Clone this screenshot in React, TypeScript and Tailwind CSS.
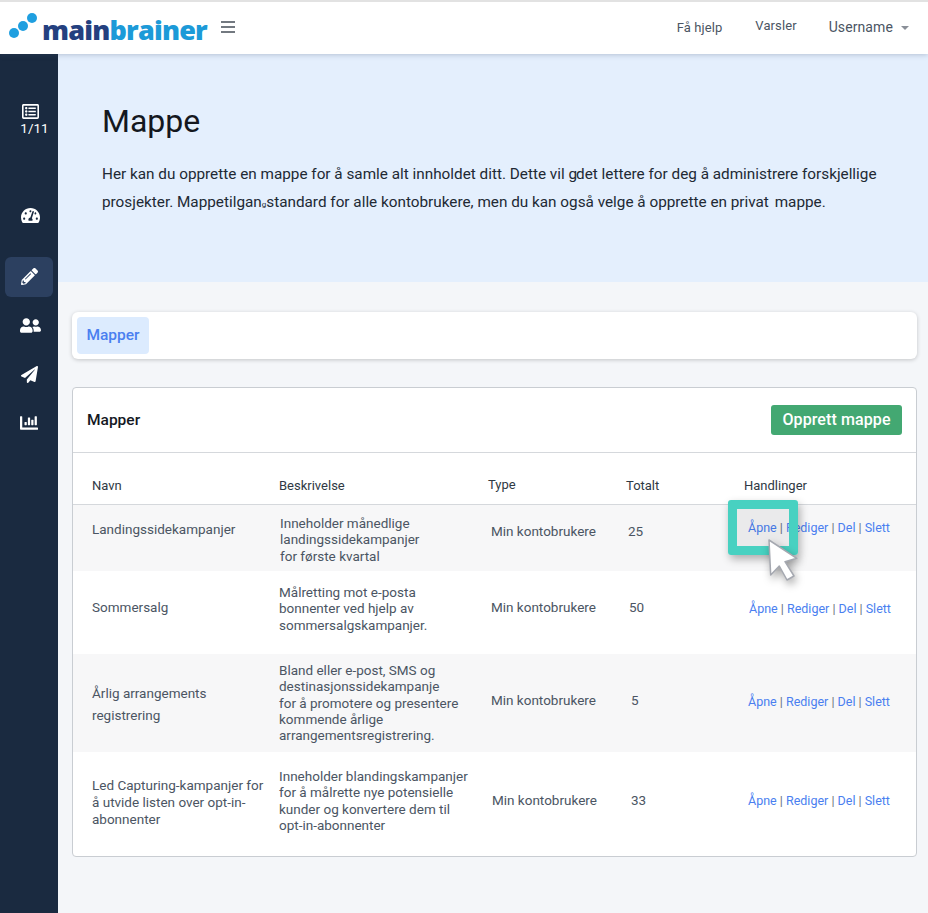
import React from 'react';
import { FaRegListAlt, FaTachometerAlt, FaPencilAlt, FaUserFriends, FaPaperPlane, FaChartBar } from 'react-icons/fa';

// the cell paddings differ per row because the picture's rows are not evenly aligned
const rows = [
  {
    name: ['Landingssidekampanjer'],
    desc: ['Inneholder månedlige', 'landingssidekampanjer', 'for første kvartal'],
    total: '25',
    rowClass: 'h-[66px] bg-[#f7f7f8]',
    nameClass: 'pt-[16px] leading-[17px]',
    descClass: 'pt-[10px] pl-px',
    typeClass: 'pt-[18px]',
    totalClass: 'pt-[18px]',
    actionClass: 'pt-[14px]',
  },
  {
    name: ['Sommersalg'],
    desc: ['Målretting mot e-posta', 'bonnenter ved hjelp av', 'sommersalgskampanjer.'],
    total: '50',
    rowClass: 'h-[83px] bg-white',
    nameClass: 'pt-[28px] leading-[17px]',
    descClass: 'pt-[13px]',
    typeClass: 'pt-[28px]',
    totalClass: 'pt-[28px] pl-px',
    actionClass: 'pt-[29px] pl-px',
  },
  {
    name: ['Årlig arrangements', 'registrering'],
    desc: ['Bland eller e-post, SMS og', 'destinasjonssidekampanje', 'for å promotere og presentere', 'kommende årlige', 'arrangementsregistrering.'],
    total: '5',
    rowClass: 'h-[98px] bg-[#f7f7f8]',
    nameClass: 'pt-[28px] leading-[22px]',
    descClass: 'pt-[8px]',
    typeClass: 'pt-[38px]',
    totalClass: 'pt-[38px] pl-[3px]',
    actionClass: 'pt-[39px]',
  },
  {
    name: ['Led Capturing-kampanjer for', 'å utvide listen over opt-in-', 'abonnenter'],
    desc: ['Inneholder blandingskampanjer', 'for å målrette nye potensielle', 'kunder og konvertere dem til', 'opt-in-abonnenter'],
    total: '33',
    rowClass: 'h-[83px] bg-white',
    nameClass: 'pt-[25px] leading-[17px]',
    descClass: 'pt-[16px]',
    typeClass: 'pt-[40px] pl-px',
    totalClass: 'pt-[40px] pl-[3px]',
    actionClass: 'pt-[40px]',
  },
];

const Actions: React.FC = () => (
  <span className="text-[12.5px] text-[#4a7ff0]">
    Åpne <span className="text-[#6b7280]">|</span> Rediger <span className="text-[#6b7280]">|</span> Del <span className="text-[#6b7280]">|</span> Slett
  </span>
);

export default function App() {
  return (
    <div className="relative w-[928px] h-[913px] overflow-hidden bg-[#f4f6f9] font-['Roboto',sans-serif] text-[#2b3440]">
      {/* top bar */}
      <header className="relative z-10 h-[54px] bg-white border-t-2 border-[#e2e2e2] shadow-[0_1px_5px_rgba(60,80,110,0.28)] flex items-center">
        <svg width="34" height="32" viewBox="0 0 34 32" className="ml-[8px] -mt-[1px] shrink-0">
          <circle cx="6" cy="21" r="5" fill="#1f9fe0" />
          <circle cx="15" cy="14" r="5" fill="#1f9fe0" />
          <circle cx="24" cy="6" r="5" fill="#1f9fe0" />
        </svg>
        <span className="mt-[3px] font-['Open_Sans',sans-serif] text-[27px] font-extrabold tracking-[-0.8px] leading-none text-[#24407f]">
          main<span className="text-[#1c9ad8]">brainer</span>
        </span>
        <svg width="14" height="12" viewBox="0 0 14 12" className="ml-[14px] -mt-[3px] shrink-0">
          <path d="M0 1h14M0 6h14M0 11h14" stroke="#454d57" strokeWidth="1.4" />
        </svg>
        <nav className="ml-auto flex items-center text-[#4b5563] -mt-[1px] tracking-[0.1px]">
          <span className="text-[13px]">Få hjelp</span>
          <span className="text-[13px] ml-[33px] -mt-[3px]">Varsler</span>
          <span className="text-[14px] ml-[32px]">Username</span>
          <span className="ml-[8px] mr-[19px] w-0 h-0 border-x-[4px] border-x-transparent border-t-[4px] border-t-[#8a8f98]" />
        </nav>
      </header>

      <div className="flex h-[859px]">
        {/* sidebar */}
        <aside className="w-[58px] shrink-0 bg-[#1a2a40] flex flex-col items-center text-white">
          <FaRegListAlt size={17} className="mt-[49px] ml-[2px]" />
          <span className="text-[13.5px] leading-none mt-[2px] ml-[11px]">1/11</span>
          <FaTachometerAlt size={19} className="mt-[70px] ml-[2px]" />
          <div className="mt-[32px] w-[48px] h-[40px] rounded-[6px] bg-[#2c4060] flex items-center justify-center">
            <FaPencilAlt size={17} />
          </div>
          <FaUserFriends size={21} className="mt-[18px] ml-[2px]" />
          <FaPaperPlane size={17} className="mt-[30px]" />
          <FaChartBar size={18} className="mt-[31px]" />
        </aside>

        <main className="flex-1 min-w-0">
          {/* intro */}
          <section className="h-[228px] bg-[#e4effd] pl-[44px] pt-[48px]">
            <h1 className="text-[32px] leading-[38px] text-[#14181f]">Mappe</h1>
            <p className="mt-[21px] text-[15.3px] leading-[27.5px] text-[#212934] whitespace-nowrap">
              Her kan du opprette en mappe for å samle alt innholdet ditt. Dette vil <span className="-mr-[1px]">g</span>det lettere for deg å administrere forskjellige
              <br />
              prosjekter. Mappetilgan<span className="text-[8px]">g</span>standard for alle kontobrukere, men du kan også velge å opprette en privat <span className="ml-[2px]">mappe.</span>
            </p>
          </section>

          <div className="pl-[14px] pr-[11px]">
            {/* tabs */}
            <div className="mt-[30px] h-[47px] rounded-[6px] bg-white shadow-[0_1px_4px_rgba(0,0,0,0.2)] flex items-center px-[5px]">
              <span className="h-[37px] w-[72px] rounded-[4px] bg-[#dcebfe] flex items-center justify-center text-[15.5px] font-medium text-[#4a7ff0]">Mapper</span>
            </div>

            {/* folder card */}
            <div className="mt-[28px] h-[470px] rounded-[4px] border border-[#c9cdd2] bg-white">
              <div className="h-[65px] border-b border-[#d5d8dc] flex items-center justify-between pl-[14px] pr-[14px]">
                <span className="mt-[1px] text-[15.5px] font-medium text-[#14181f]">Mapper</span>
                <span className="h-[30px] w-[131px] rounded-[3px] bg-[#43a872] flex items-center justify-center text-[16px] font-medium text-white tracking-[0.1px]">Opprett mappe</span>
              </div>

              <div className="h-[52px] border-b border-[#d5d8dc] flex items-center text-[13px] text-[#2f3944] pt-[15px]">
                <span className="w-[206px] pl-[19px]">Navn</span>
                <span className="w-[209px]">Beskrivelse</span>
                <span className="w-[138px] -mt-[3px]">Type</span>
                <span className="w-[118px]">Totalt</span>
                <span>Handlinger</span>
              </div>

              {rows.map(row => (
                <div key={row.total} className={`flex items-start text-[13.5px] text-[#4b5563] ${row.rowClass}`}>
                  <div className={`w-[206px] pl-[19px] ${row.nameClass}`}>
                    {row.name.map(line => <div key={line}>{line}</div>)}
                  </div>
                  <div className={`w-[212px] leading-[16.3px] ${row.descClass}`}>
                    {row.desc.map(line => <div key={line}>{line}</div>)}
                  </div>
                  <div className={`w-[137px] leading-[17px] ${row.typeClass}`}>Min kontobrukere</div>
                  <div className={`w-[120px] leading-[17px] ${row.totalClass}`}>{row.total}</div>
                  <div className={`leading-[17px] ${row.actionClass}`}><Actions /></div>
                </div>
              ))}
            </div>
          </div>
        </main>
      </div>

      {/* highlight + cursor over the first row */}
      <div className="absolute left-[728px] top-[500px] w-[70px] h-[55px] rounded-[3px] border-[9px] border-[#48d1c1] bg-black/5 shadow-[2px_4px_8px_rgba(0,0,0,0.3)]" />
      <svg width="34" height="46" viewBox="0 0 34 46" className="absolute left-[766px] top-[538px] drop-shadow-[2px_4px_4px_rgba(0,0,0,0.35)]">
        <path d="M3 2 L30.7 20.3 L19 23.7 L28 38 L21 42 L13.3 28 L4.7 37 Z" fill="#ffffff" stroke="#a5a8b0" strokeWidth="1.5" strokeLinejoin="round" />
      </svg>
    </div>
  );
}
